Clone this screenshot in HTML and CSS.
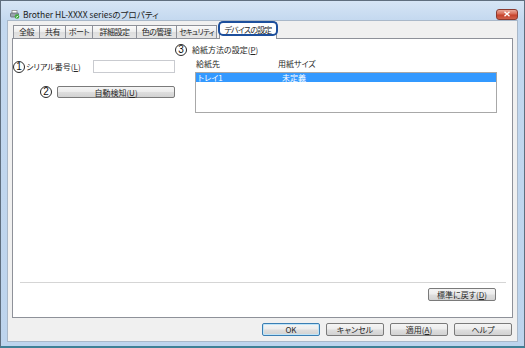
FILE: index.html
```html
<!DOCTYPE html>
<html>
  <head>
    <meta charset="utf-8" />
    <title>Brother HL-XXXX seriesのプロパティ</title>
    <link rel="stylesheet" href="styles.css">
  </head>
  <body>
    <div class="window">
      <div class="titlebar">
        <svg class="app-icon" width="10" height="9" viewBox="0 0 10 9">
          <rect x="2" y="0.5" width="5" height="3" fill="#fff" stroke="#8a8a8a" stroke-width="0.8" />
          <rect x="0.5" y="3" width="8" height="4" rx="1" fill="#9aa3ad" stroke="#5e6670" stroke-width="0.8" />
          <circle cx="7" cy="6.5" r="2.3" fill="#3da83a" />
          <path d="M5.9 6.5 L6.8 7.4 L8.2 5.7" fill="none" stroke="#fff" stroke-width="0.9" />
        </svg>
        <span class="title">Brother HL-XXXX seriesのプロパティ</span>
        <div class="close">
          <svg width="8" height="6" viewBox="0 0 8 6">
            <path d="M1.5 0.8 L6.5 5.2 M6.5 0.8 L1.5 5.2" stroke="#fff" stroke-width="1.4" />
          </svg>
        </div>
      </div>

      <div class="client">
        <div class="tabs">
          <div class="tab w27">全般</div>
          <div class="tab w27">共有</div>
          <div class="tab w28">ポート</div>
          <div class="tab w45">詳細設定</div>
          <div class="tab w41">色の管理</div>
          <div class="tab w41 kana">セキュリティ</div>
          <div class="tab active">デバイスの設定</div>
        </div>

        <div class="panel">
          <div class="panel-body">
            <div class="left-col">
              <div class="serial-row">
                <span class="num">1</span>
                <label>シリアル番号(<u>L</u>)</label>
                <input type="text" class="serial-input" />
              </div>
              <div class="detect-row">
                <span class="num">2</span>
                <button class="btn wide">自動検知(<u>U</u>)</button>
              </div>
            </div>

            <div class="right-col">
              <div class="paper-title">
                <span class="num">3</span>
                <span>給紙方法の設定(<u>P</u>)</span>
              </div>
              <div class="list-head">
                <span class="col-src">給紙先</span>
                <span>用紙サイズ</span>
              </div>
              <div class="list">
                <div class="list-item selected">
                  <span class="col-src">トレイ1</span>
                  <span>未定義</span>
                </div>
              </div>
            </div>
          </div>
          <div class="sep"></div>
          <div class="defaults-row">
            <button class="btn defaults">標準に戻す(<u>D</u>)</button>
          </div>
        </div>

        <div class="actions">
          <button class="btn default">OK</button>
          <button class="btn">キャンセル</button>
          <button class="btn">適用(<u>A</u>)</button>
          <button class="btn">ヘルプ</button>
        </div>
      </div>
    </div>
  </body>
</html>
```

FILE: styles.css
```css
* {
  box-sizing: border-box;
}

body {
  margin: 0;
  font-family: "Noto Sans CJK JP", "Liberation Sans", sans-serif;
  font-size: 8px;
  font-feature-settings: "palt";
  color: #262626;
  background: #fff;
}

u {
  text-decoration: underline;
  text-underline-offset: 1px;
}

.window {
  width: 525px;
  height: 348px;
  border: 1px solid #5f6e7e;
  border-bottom: 2px solid #3f8096;
  background: linear-gradient(#d6e5f5, #c3d8ef 20px, #bdd4ed);
  padding: 0 6px 4px 6px;
  display: flex;
  flex-direction: column;
}

.titlebar {
  height: 19px;
  padding-top: 7px;
  display: flex;
  align-items: center;
}

.app-icon {
  margin-left: 3px;
}

.title {
  margin-left: 3px;
  font-size: 8.5px;
  line-height: 12px;
  color: #1b1b1b;
}

.close {
  margin-left: auto;
  width: 22px;
  height: 11px;
  border: 1px solid #8a3a30;
  border-radius: 3px;
  background: linear-gradient(#eaa899, #d86a55 45%, #c6422c 55%, #d0604a);
  display: flex;
  align-items: center;
  justify-content: center;
}

.client {
  flex: 1;
  background: #f0f0f0;
  border: 1px solid #a9b8c9;
  padding: 1px 4px 5px 4px;
  display: flex;
  flex-direction: column;
}

/* タブ */
.tabs {
  height: 17px;
  margin-bottom: -1px;
  padding-left: 1px;
  display: flex;
  align-items: flex-end;
}

.tab {
  height: 14px;
  padding: 0;
  margin-right: -1px;
  border: 1px solid #8e9199;
  border-bottom: none;
  background: linear-gradient(#fbfbfb, #ebebeb 50%, #dedede 50%, #e6e6e6);
  font-size: 8px;
  line-height: 12px;
  letter-spacing: -0.5px;
  text-align: center;
  white-space: nowrap;
  overflow: hidden;
}

.tab.kana {
  font-size: 7.5px;
  letter-spacing: -0.7px;
}

.w27 { width: 27px; }
.w28 { width: 28px; }
.w41 { width: 41px; }
.w45 { width: 45px; }

.tab.active {
  position: relative;
  width: 58px;
  height: 17px;
  margin-left: 3px;
  background: #fff;
  line-height: 13px;
  letter-spacing: -0.8px;
  overflow: visible;
}

.tab.active::after {
  content: "";
  position: absolute;
  top: -2px;
  left: -2px;
  right: -2px;
  bottom: 3px;
  border: 2px solid #1d4f9c;
  border-radius: 5px;
}

.panel {
  height: 280px;
  background: #fff;
  border: 1px solid #8e9199;
  display: flex;
  flex-direction: column;
}

.panel-body {
  height: 243px;
  display: flex;
}

.num {
  width: 12px;
  height: 12px;
  border: 1px solid #2a2a2a;
  border-radius: 50%;
  display: inline-flex;
  align-items: center;
  justify-content: center;
  font-family: "Liberation Sans", sans-serif;
  font-size: 10px;
  line-height: 1;
  color: #111;
  flex: none;
}

.left-col {
  width: 162px;
  padding-top: 21px;
}

.serial-row {
  height: 13px;
  display: flex;
  align-items: center;
}

.serial-row label {
  margin-left: 1px;
  line-height: 11px;
}

.serial-input {
  margin-left: auto;
  width: 82px;
  height: 13px;
  border: 1px solid #c9cbd0;
  background: #fff;
  outline: none;
}

.detect-row {
  margin-top: 13px;
  padding-left: 27px;
  display: flex;
  align-items: center;
}

.btn {
  height: 13px;
  padding: 0;
  border: 1px solid #7a7a7a;
  border-radius: 2px;
  background: linear-gradient(#f4f4f4, #ececec 48%, #dedede 52%, #d2d2d2);
  font: inherit;
  font-feature-settings: "palt";
  line-height: 11px;
  color: #262626;
}

.btn.wide {
  margin-left: auto;
  width: 118px;
  height: 12px;
}

.right-col {
  flex: 1;
  padding-top: 5px;
}

.paper-title {
  height: 11px;
  display: flex;
  align-items: center;
  gap: 5px;
  line-height: 11px;
}

.list-head {
  margin-top: 3px;
  padding-left: 21px;
  height: 11px;
  line-height: 11px;
  display: flex;
}

.col-src {
  width: 82px;
}

.list {
  margin-top: 3px;
  margin-left: 20px;
  width: 302px;
  height: 41px;
  border: 1px solid #a8a8a8;
  padding: 0;
}

.list-item {
  height: 9px;
  padding-left: 2px;
  display: flex;
  line-height: 9px;
}

.list-item .col-src {
  width: 84px;
}

.list-item.selected {
  background: #3399ff;
  color: #fff;
}

.sep {
  margin: 0 6px 0 7px;
  border-top: 1px solid #d5d5d5;
}

.defaults-row {
  padding: 5px 16px 0 0;
  display: flex;
  justify-content: flex-end;
}

.btn.defaults {
  width: 68px;
}

.actions {
  margin-top: 5px;
  padding-right: 1px;
  display: flex;
  justify-content: flex-end;
  gap: 6px;
}

.actions .btn {
  width: 58px;
}

.actions .btn.default {
  border-color: #3a7eb3;
  box-shadow: inset 0 0 0 1px #bfe4f8;
}
```
